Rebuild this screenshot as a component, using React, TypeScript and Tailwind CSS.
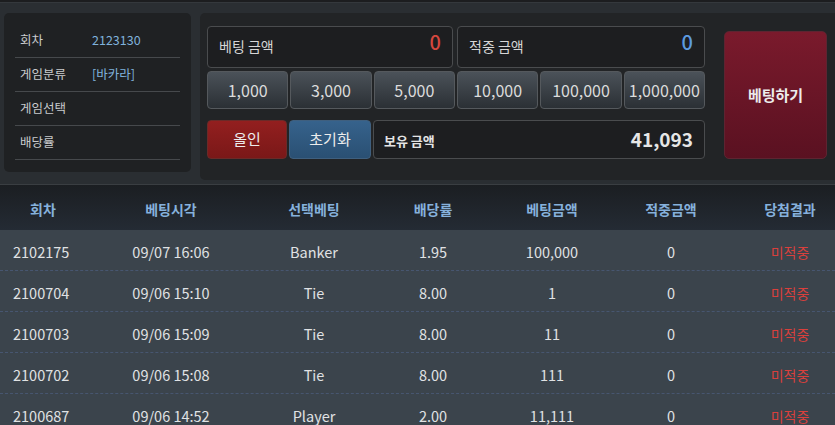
import React from 'react'

const font = { fontFamily: '"Noto Sans CJK KR", "Noto Sans", sans-serif' }

const info = [
  { label: '회차', value: '2123130' },
  { label: '게임분류', value: '[바카라]' },
  { label: '게임선택', value: '' },
  { label: '배당률', value: '' },
]

const chips = ['1,000', '3,000', '5,000', '10,000', '100,000', '1,000,000']

const rows = [
  ['2102175', '09/07 16:06', 'Banker', '1.95', '100,000', '0'],
  ['2100704', '09/06 15:10', 'Tie', '8.00', '1', '0'],
  ['2100703', '09/06 15:09', 'Tie', '8.00', '11', '0'],
  ['2100702', '09/06 15:08', 'Tie', '8.00', '111', '0'],
  ['2100687', '09/06 14:52', 'Player', '2.00', '11,111', '0'],
]

const headers = ['회차', '베팅시각', '선택베팅', '배당률', '베팅금액', '적중금액', '당첨결과']

const gridCols = 'grid grid-cols-[86px_170px_116px_122px_116px_122px_1fr]'

export default function App() {
  return (
    <div className="w-[835px] h-[425px] overflow-hidden bg-[#1c1d1f]" style={font}>
      {/* top betting area */}
      <div className="mt-[2px] h-[183px] bg-[#2a2e32] border-t border-b border-t-[#34383c] border-b-[#3a3e42] flex pt-[10px] pl-[4px] gap-[9px]">
        {/* info panel */}
        <div className="w-[187px] h-[159px] rounded-[5px] bg-[#1f2123] px-[11px] pt-[11px]">
          {info.map((r) => (
            <div
              key={r.label}
              className="h-[34px] flex items-center border-b border-[#46494c] text-[12.5px]"
            >
              <span className="w-[77px] pl-[5px] text-[#c9cbcd]">{r.label}</span>
              <span className="text-[#7fb2dc]">{r.value}</span>
            </div>
          ))}
        </div>

        {/* bet panel */}
        <div className="flex-1 h-[167px] rounded-l-[5px] bg-[#222426] flex pl-[7px] pt-[13px]">
          <div className="w-[498px] flex flex-col">
            <div className="flex gap-[4px] h-[42px]">
              <div className="flex-1 rounded-[4px] border border-[#4a4c4e] bg-[#1d1e20] flex justify-between pl-[11px] pr-[11px]">
                <span className="text-[14px] text-[#d6d6d6] mt-[9px]">베팅 금액</span>
                <span className="text-[20px] font-medium text-[#d4473e] leading-none mt-[5px]">0</span>
              </div>
              <div className="w-[248px] rounded-[4px] border border-[#4a4c4e] bg-[#1d1e20] flex justify-between pl-[11px] pr-[11px]">
                <span className="text-[14px] text-[#d6d6d6] mt-[9px]">적중 금액</span>
                <span className="text-[20px] font-medium text-[#5c9be0] leading-none mt-[5px]">0</span>
              </div>
            </div>
            <div className="grid grid-cols-6 gap-[2px] h-[38px] mt-[3px]">
              {chips.map((c) => (
                <button
                  key={c}
                  className="rounded-[4px] border border-[#55595d] bg-gradient-to-b from-[#4b5259] to-[#2b3035] text-[16px] text-[#dcdcdc]"
                >
                  {c}
                </button>
              ))}
            </div>
            <div className="flex gap-[2px] h-[39px] mt-[11px]">
              <button className="w-[80px] rounded-[4px] border border-[#6b2a28] bg-gradient-to-b from-[#931f1f] to-[#7a1818] text-[15px] text-[#ececec]">
                올인
              </button>
              <button className="w-[82px] rounded-[4px] border border-[#3f5f7e] bg-gradient-to-b from-[#36628c] to-[#2a5073] text-[15px] text-[#ececec]">
                초기화
              </button>
              <div className="flex-1 rounded-[4px] border border-[#4a4c4e] bg-[#1d1e20] flex items-center justify-between pl-[10px] pr-[11px]">
                <span className="text-[13px] font-bold text-[#e4e4e4] mt-[2px]">보유 금액</span>
                <span className="text-[19px] font-bold text-[#e6e6e6]">41,093</span>
              </div>
            </div>
          </div>
          <button className="ml-[19px] mt-[5px] w-[103px] h-[128px] rounded-[5px] border border-[#5e2431] bg-gradient-to-b from-[#7a1a2c] to-[#5a1121] text-[15px] font-bold text-[#ececec]">
            베팅하기
          </button>
        </div>
      </div>

      {/* table */}
      <div>
        <div className={`${gridCols} h-[45px] items-center pt-[4px] bg-gradient-to-b from-[#1b1e22] to-[#242b34] text-[14px] font-bold text-[#86b1dc]`}>
          {headers.map((h, i) => (
            <div key={h} className={i === 6 ? 'text-center pl-[13px]' : 'text-center'}>
              {h}
            </div>
          ))}
        </div>
        {rows.map((r) => (
          <div
            key={r[0]}
            className={`${gridCols} h-[41px] items-center pt-[4px] bg-[#3b444c] border-b border-dashed border-[#475670] text-[14.5px] text-[#e0e2e4]`}
          >
            <div className="pl-[13px]">{r[0]}</div>
            {r.slice(1).map((v, i) => (
              <div key={i} className="text-center">
                {v}
              </div>
            ))}
            <div className="text-center pl-[13px] text-[14px] text-[#d9403c]">미적중</div>
          </div>
        ))}
      </div>
    </div>
  )
}
